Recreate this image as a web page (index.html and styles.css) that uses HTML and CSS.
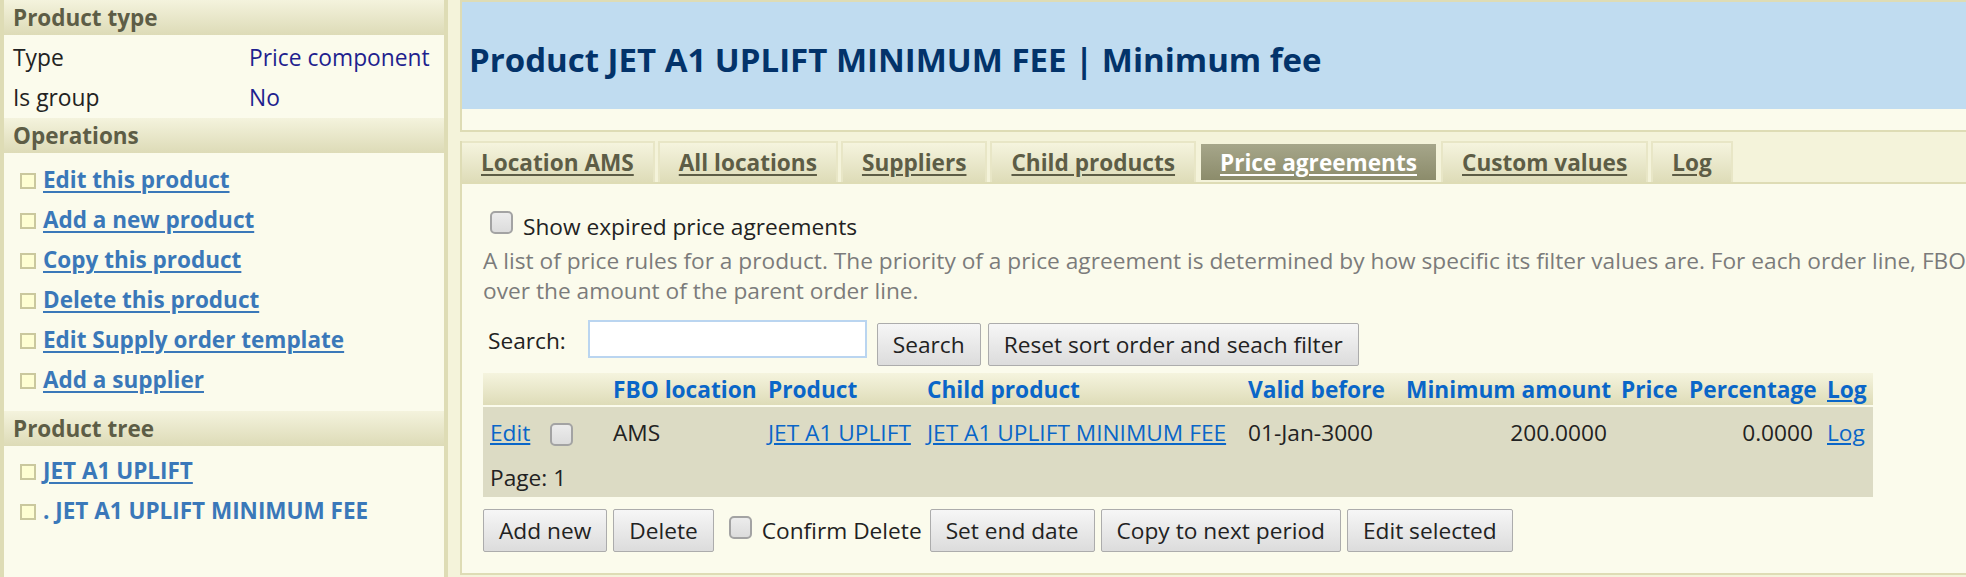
FILE: index.html
```html
<!DOCTYPE html>
<html>
<head>
<meta charset="utf-8">
<title>Product JET A1 UPLIFT MINIMUM FEE</title>
<link rel="stylesheet" href="styles.css">
</head>
<body>
<div class="page">
  <aside class="sidebar">
    <div class="side-head">Product type</div>
    <div class="side-props">
      <div class="prop"><span class="prop-label">Type</span><span class="prop-value">Price component</span></div>
      <div class="prop"><span class="prop-label">Is group</span><span class="prop-value">No</span></div>
    </div>
    <div class="side-head">Operations</div>
    <ul class="side-links ops">
      <li><span class="bullet"></span><a href="#">Edit this product</a></li>
      <li><span class="bullet"></span><a href="#">Add a new product</a></li>
      <li><span class="bullet"></span><a href="#">Copy this product</a></li>
      <li><span class="bullet"></span><a href="#">Delete this product</a></li>
      <li><span class="bullet"></span><a href="#">Edit Supply order template</a></li>
      <li><span class="bullet"></span><a href="#">Add a supplier</a></li>
    </ul>
    <div class="side-head">Product tree</div>
    <ul class="side-links tree">
      <li><span class="bullet"></span><a href="#">JET A1 UPLIFT</a></li>
      <li><span class="bullet"></span><span class="current">. JET A1 UPLIFT MINIMUM FEE</span></li>
    </ul>
  </aside>

  <main class="main">
    <section class="title-box">
      <h1 class="title">Product JET A1 UPLIFT MINIMUM FEE | Minimum fee</h1>
    </section>

    <section class="tab-panel">
      <nav class="tabs">
        <a class="tab" href="#">Location AMS</a>
        <a class="tab" href="#">All locations</a>
        <a class="tab" href="#">Suppliers</a>
        <a class="tab" href="#">Child products</a>
        <a class="tab active" href="#">Price agreements</a>
        <a class="tab" href="#">Custom values</a>
        <a class="tab" href="#">Log</a>
      </nav>

      <div class="content">
        <label class="check-line"><input type="checkbox" class="cb"> Show expired price agreements</label>
        <p class="desc">A list of price rules for a product. The priority of a price agreement is determined by how specific its filter values are. For each order line, FBO<br>over the amount of the parent order line.</p>

        <div class="search-row">
          <span class="search-label">Search:</span>
          <input type="text" class="search-input">
          <button class="btn btn-search">Search</button>
          <button class="btn">Reset sort order and seach filter</button>
        </div>

        <table class="grid">
          <thead>
            <tr>
              <th class="c-edit"></th>
              <th class="c-sel"></th>
              <th class="c-fbo">FBO location</th>
              <th class="c-prod">Product</th>
              <th class="c-child">Child product</th>
              <th class="c-valid">Valid before</th>
              <th class="c-min num">Minimum amount</th>
              <th class="c-price">Price</th>
              <th class="c-pct num">Percentage</th>
              <th class="c-log"><a href="#">Log</a></th>
            </tr>
          </thead>
          <tbody>
            <tr class="data-row">
              <td><a href="#">Edit</a></td>
              <td><input type="checkbox" class="cb"></td>
              <td>AMS</td>
              <td><a href="#">JET A1 UPLIFT</a></td>
              <td><a href="#">JET A1 UPLIFT MINIMUM FEE</a></td>
              <td>01-Jan-3000</td>
              <td class="num">200.0000</td>
              <td></td>
              <td class="num">0.0000</td>
              <td><a href="#">Log</a></td>
            </tr>
            <tr class="pager-row">
              <td colspan="10">Page: 1</td>
            </tr>
          </tbody>
        </table>

        <div class="actions">
          <button class="btn">Add new</button>
          <button class="btn">Delete</button>
          <label class="confirm"><input type="checkbox" class="cb"> Confirm Delete</label>
          <button class="btn">Set end date</button>
          <button class="btn">Copy to next period</button>
          <button class="btn">Edit selected</button>
        </div>
      </div>
    </section>
  </main>
</div>
</body>
</html>
```

FILE: styles.css
```css
* { box-sizing: border-box; }

html, body {
  margin: 0;
  padding: 0;
  height: 100%;
  overflow: hidden;
}

body {
  background: #f4f3da;
  font-family: "Segoe UI", "Open Sans", sans-serif;
  color: #222;
}

.page {
  display: flex;
  align-items: stretch;
  height: 577px;
  width: 2400px;
}

/* ---------- Sidebar ---------- */
.sidebar {
  width: 448px;
  flex: none;
  background: #fbfbec;
  border-left: 4px solid #dedcb5;
  border-right: 4px solid #dedcb5;
  font-size: 22.8px;
}

.side-head {
  height: 35px;
  line-height: 36px;
  padding-left: 9px;
  font-weight: 700;
  color: #5d5d46;
  background: linear-gradient(#f4f3dd, #dddbb7);
  font-size: 22.5px;
}

.side-props {
  padding: 3px 0 0 9px;
  height: 83px;
}

.prop {
  display: flex;
  height: 40px;
  line-height: 40px;
}

.prop-label {
  width: 236px;
  color: #222;
}

.prop-value {
  color: #1f1f8f;
}

.side-links {
  list-style: none;
  margin: 0;
  padding: 6px 0 12px 16px;
}

.side-links.tree {
  padding-top: 4px;
}

.side-links li {
  display: flex;
  align-items: center;
  height: 40px;
}

.bullet {
  width: 16px;
  height: 16px;
  flex: none;
  background: #fefed2;
  border: 2px solid #cac89e;
  margin-right: 7px;
  margin-top: 3px;
}

.side-links a,
.side-links .current {
  color: #3a78b9;
  font-weight: 700;
  font-size: 22.5px;
}

.side-links a {
  text-decoration: underline;
  text-decoration-thickness: 2px;
  text-underline-offset: 3px;
}

/* ---------- Main ---------- */
.main {
  margin-left: 12px;
  width: 1800px;
  flex: none;
  display: flex;
  flex-direction: column;
}

.title-box {
  border: 2px solid #dedcb5;
  background: #fbfbec;
  height: 132px;
}

.title {
  margin: 0;
  height: 107px;
  background: #c0dcf0;
  color: #03336a;
  font-size: 33px;
  font-weight: 700;
  line-height: 116px;
  padding-left: 7px;
  white-space: nowrap;
}

.tab-panel {
  margin-top: 9px;
  flex: 1;
  display: flex;
  flex-direction: column;
  margin-bottom: 2px;
}

.tabs {
  display: flex;
  gap: 3px;
  height: 41px;
  align-items: stretch;
  border-left: 2px solid #dedcb5;
}

.tab {
  display: block;
  padding: 0 19px;
  line-height: 40px;
  font-size: 22.6px;
  font-weight: 700;
  color: #5d5d46;
  background: linear-gradient(#f5f4de, #dedcb8);
  border: 2px solid #e8e6c6;
  border-bottom: none;
  text-decoration: underline;
  text-decoration-thickness: 2px;
  text-underline-offset: 3px;
  white-space: nowrap;
}

.tab:first-child {
  border-left: none;
}

.tab.active {
  color: #fff;
  background: linear-gradient(#a6a68a, #8c8c6b);
  border-color: #f4f3da;
  margin-top: 1px;
  height: 38px;
  line-height: 37px;
}

.content {
  flex: 1;
  background: #fbfbec;
  border: 2px solid #dedcb5;
  border-right: none;
  padding: 27px 0 0 21px;
  font-size: 22.7px;
}

.check-line {
  display: flex;
  align-items: center;
  height: 30px;
  padding-left: 7px;
  color: #222;
}

.cb {
  appearance: none;
  -webkit-appearance: none;
  width: 23px;
  height: 23px;
  margin: 0 10px 0 0;
  border: 2px solid #a3a3a3;
  border-radius: 5px;
  background: linear-gradient(#ececec, #dcdcdc);
  flex: none;
}

.check-line .cb {
  margin-top: -8px;
}

.desc {
  margin: 5px 0 0 0;
  line-height: 30px;
  color: #7b7b7b;
  white-space: nowrap;
}

.search-row {
  display: flex;
  align-items: flex-start;
  margin-top: 14px;
  height: 46px;
}

.search-label {
  margin: 6px 22px 0 5px;
  line-height: 30px;
}

.search-input {
  width: 279px;
  height: 38px;
  border: 2px solid #bad5f0;
  background: #fff;
  margin: 0 10px 0 0;
}

.btn {
  height: 43px;
  padding: 0 15px;
  border: 1px solid #acacac;
  border-radius: 2px;
  background: linear-gradient(#f6f6f6, #dcdcdc);
  font-family: inherit;
  font-size: 22.7px;
  color: #222;
  margin: 3px 7px 0 0;
}

.grid {
  margin-top: 7px;
  border-collapse: separate;
  border-spacing: 0;
  table-layout: fixed;
  width: 1390px;
}

.grid th,
.grid td {
  padding: 0 7px;
  text-align: left;
  white-space: nowrap;
  overflow: visible;
}

.grid th {
  height: 34px;
  font-weight: 700;
  color: #0a66c8;
  background: linear-gradient(#f5f4de, #dedcb8);
  border-bottom: 2px solid #fbfbec;
}

.grid th a {
  color: #0a66c8;
}

.grid .num {
  text-align: right;
}

.c-edit { width: 60px; }
.c-sel { width: 63px; }
.c-fbo { width: 155px; }
.c-prod { width: 159px; }
.c-child { width: 321px; }
.c-valid { width: 158px; }
.c-min { width: 215px; }
.c-price { width: 68px; }
.c-pct { width: 138px; }
.c-log { width: 53px; }

.data-row td {
  height: 50px;
  background: #dcdbc4;
}

.data-row .cb {
  margin: 4px 0 0 0;
  display: block;
}

.grid td a {
  color: #0a66c8;
}

.pager-row td {
  height: 40px;
  background: #dcdbc4;
}

.actions {
  display: flex;
  align-items: flex-start;
  margin-top: 12px;
}

.actions .btn {
  margin: 0 6px 0 0;
}

.confirm {
  display: flex;
  align-items: center;
  height: 43px;
  margin: 0 8px 0 9px;
}

.confirm .cb {
  margin: -6px 10px 0 0;
}
```
